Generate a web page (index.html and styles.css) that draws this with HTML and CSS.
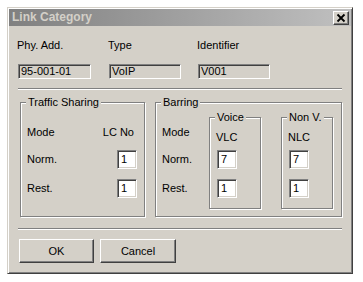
FILE: index.html
```html
<!DOCTYPE html>
<html>
<head>
<meta charset="utf-8">
<link rel="stylesheet" href="styles.css">
</head>
<body>
<div class="dialog">
  <div class="titlebar">
    <span class="title">Link Category</span>
    <span class="close"><svg width="14" height="12" viewBox="0 0 14 12"><path d="M3.5 2.5 L10.5 9.5 M10.5 2.5 L3.5 9.5" stroke="#000" stroke-width="1.8" fill="none"/></svg></span>
  </div>
  <div class="body">
    <div class="fields">
      <div class="field f1"><div class="label">Phy. Add.</div><div class="edit ro w1">95-001-01</div></div>
      <div class="field f2"><div class="label">Type</div><div class="edit ro w2">VoIP</div></div>
      <div class="field f3"><div class="label">Identifier</div><div class="edit ro w2">V001</div></div>
    </div>
    <div class="sep"></div>
    <div class="groups">
      <div class="group traffic">
        <span class="legend">Traffic Sharing</span>
        <div class="inner">
          <div class="hrow"><span>Mode</span><span>LC No</span></div>
          <div class="row r1"><span>Norm.</span><span class="edit sm">1</span></div>
          <div class="row r2"><span>Rest.</span><span class="edit sm">1</span></div>
        </div>
      </div>
      <div class="group barring">
        <span class="legend">Barring</span>
        <div class="blabels">
          <div class="hrow"><span>Mode</span></div>
          <div class="row r1"><span>Norm.</span></div>
          <div class="row r2"><span>Rest.</span></div>
        </div>
        <div class="group sub">
          <span class="legend">Voice</span>
          <div class="subin">
            <div class="hrow"><span>VLC</span></div>
            <span class="edit sm s1">7</span>
            <span class="edit sm s2">1</span>
          </div>
        </div>
        <div class="group sub nonv">
          <span class="legend">Non V.</span>
          <div class="subin">
            <div class="hrow"><span>NLC</span></div>
            <span class="edit sm s1">7</span>
            <span class="edit sm s2">1</span>
          </div>
        </div>
      </div>
    </div>
    <div class="sep sep2"></div>
    <div class="buttons">
      <div class="btn ok">OK</div>
      <div class="btn cancel">Cancel</div>
    </div>
  </div>
</div>
</body>
</html>
```
FILE: styles.css
```css
* { box-sizing: border-box; }
body {
  margin: 0;
  background: #fff;
  font: 11px/13px "Liberation Sans", Arial, sans-serif;
  color: #000;
}
.dialog {
  margin: 7px 0 0 7px;
  width: 346px;
  height: 267px;
  border: 1px solid;
  border-color: #d4d0c8 #404040 #404040 #d4d0c8;
  box-shadow: inset 1px 1px #fff, inset -1px -1px #808080;
  padding: 1px;
  background: #d4d0c8;
}
.titlebar {
  height: 17px;
  display: flex;
  align-items: center;
  justify-content: space-between;
  background: linear-gradient(to right, #808080, #c0c0c0);
  padding: 0 2px 0 3px;
}
.title {
  font-weight: bold;
  font-size: 12px;
  color: #d4d0c8;
}
.close {
  width: 16px;
  height: 14px;
  display: flex;
  align-items: center;
  justify-content: center;
  background: #d4d0c8;
  border: 1px solid;
  border-color: #fff #404040 #404040 #fff;
  box-shadow: inset -1px -1px #808080;
}
.close svg { display: block; }
.body { padding: 13px 8px 0 8px; }
.fields { display: flex; }
.f1 { width: 91px; }
.f2 { width: 89px; }
.f3 { flex: 1; }
.edit {
  display: block;
  border: 1px solid;
  border-color: #808080 #fff #fff #808080;
  box-shadow: inset 1px 1px #404040, inset -1px -1px #d4d0c8;
  padding-left: 2px;
  line-height: 13px;
  background: #fff;
}
.edit.ro {
  background: #d4d0c8;
  margin: 12px 0 0 1px;
  height: 15px;
  padding-left: 2px;
}
.w1 { width: 73px; }
.w2 { width: 72px; }
.edit.sm {
  width: 20px;
  height: 19px;
  line-height: 17px;
  padding-left: 3px;
}
.sep {
  margin: 9px 0 0 1px;
  width: 324px;
  height: 2px;
  border-top: 1px solid #808080;
  border-bottom: 1px solid #fff;
}
.groups {
  display: flex;
  margin: 12px 0 0 3px;
}
.group {
  position: relative;
  border: 1px solid #808080;
  box-shadow: inset 1px 1px #fff, 1px 1px #fff;
  height: 115px;
}
.legend {
  position: absolute;
  top: -7px;
  left: 5px;
  padding: 0 2px;
  background: #d4d0c8;
  line-height: 13px;
  white-space: nowrap;
}
.traffic { width: 125px; }
.barring { width: 187px; margin-left: 10px; display: flex; }
.inner { padding-top: 23px; }
.hrow {
  display: flex;
  justify-content: space-between;
  height: 13px;
}
.inner .hrow { padding: 0 10px 0 6px; }
.row {
  display: flex;
  justify-content: space-between;
  align-items: center;
  height: 19px;
  padding: 0 7px 0 6px;
}
.r1 { margin-top: 11px; }
.r2 { margin-top: 10px; }
.blabels { width: 53px; padding-top: 23px; }
.blabels .hrow { padding-left: 6px; }
.blabels .row { padding-left: 6px; }
.sub { width: 52px; height: 92px; margin-top: 14px; }
.nonv { margin-left: 20px; }
.subin { padding: 13px 0 0 6px; }
.s1 { margin: 6px 0 0 1px; }
.s2 { margin: 10px 0 0 1px; }
.sep2 { margin-top: 11px; }
.buttons {
  display: flex;
  gap: 6px;
  margin: 9px 0 0 2px;
}
.btn {
  height: 24px;
  display: flex;
  align-items: center;
  justify-content: center;
  border: 1px solid;
  border-color: #fff #404040 #404040 #fff;
  box-shadow: inset -1px -1px #808080;
  background: #d4d0c8;
}
.ok { width: 75px; }
.cancel { width: 76px; }
```
